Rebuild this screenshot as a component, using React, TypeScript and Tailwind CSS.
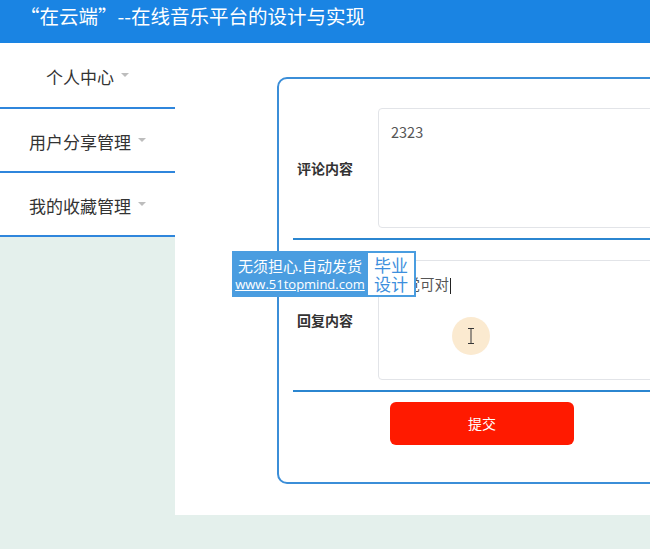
import { ReactNode } from 'react';

const font = { fontFamily: '"Microsoft YaHei", "Noto Sans CJK SC", "Noto Sans", sans-serif' };

function Caret() {
    return <span className="ml-[7px] inline-block w-0 h-0 border-l-[4px] border-r-[4px] border-t-[4px] border-l-transparent border-r-transparent border-t-[#bdbdbd] translate-y-[-2px]" />;
}

function MenuItem({ label, first }: { label: string; first?: boolean }) {
    return (
        <div className={`${first ? 'h-[66px]' : 'h-[64px]'} bg-white border-b-2 border-[#2f86dc] flex items-center justify-center pt-[4px] text-[17px] text-[#333]`}>
            {label}
            <Caret />
        </div>
    );
}

function FormRow({ label, children }: { label: string; children: ReactNode }) {
    return (
        <div className="flex items-center">
            <div className="w-[85px] pl-[4px] text-[14px] font-bold text-[#333]">{label}</div>
            <div className="w-[320px] h-[120px] border border-[#e2e4e8] rounded-[4px] bg-white px-[12px] pt-[12px] text-[14.5px] text-[#555]">
                {children}
            </div>
        </div>
    );
}

export default function App() {
    return (
        <div className="w-[650px] h-[549px] overflow-hidden bg-[#e4f0ec] relative" style={font}>
            <div className="h-[43px] bg-[#1a84e3] pl-[20px] pt-[2px] leading-[28px] text-white text-[19.5px]">
                “在云端”--在线音乐平台的设计与实现
            </div>
            <div className="flex">
                <div className="w-[175px] shrink-0">
                    <MenuItem label="个人中心" first />
                    <MenuItem label="用户分享管理" />
                    <MenuItem label="我的收藏管理" />
                </div>
                <div className="w-[475px] h-[472px] bg-white pt-[34px] pl-[102px] shrink-0">
                    <div className="w-[440px] h-[407px] border-2 border-[#3b8ed8] rounded-[10px] pt-[29px] pl-[14px]">
                        <FormRow label="评论内容">2323</FormRow>
                        <div className="h-[2px] bg-[#2b86d0] mt-[10px] mb-[20px]" />
                        <FormRow label="回复内容">
                            <span>我觉可对</span>
                            <span className="inline-block w-px h-[16px] bg-[#222] align-middle ml-[1px]" />
                        </FormRow>
                        <div className="h-[2px] bg-[#2b86d0] mt-[10px] mb-[10px]" />
                        <button className="ml-[97px] w-[184px] h-[43px] rounded-[6px] bg-[#ff1a00] text-white text-[14px]">
                            提交
                        </button>
                    </div>
                </div>
            </div>

            {/* watermark */}
            <div className="absolute left-[232px] top-[251px] h-[46px] flex bg-[#4a9de0] p-[2px] pl-0">
                <div className="w-[136px] flex flex-col items-center justify-center text-white leading-none">
                    <div className="text-[15px] mb-[5px]">无须担心.自动发货</div>
                    <div className="text-[13px] underline" style={{ fontFamily: '"Open Sans", "Noto Sans", sans-serif' }}>www.51topmind.com</div>
                </div>
                <div className="w-[46px] bg-white flex flex-col items-center justify-center text-[#3d8fdd] text-[17px] leading-[19px]">
                    <div>毕业</div>
                    <div>设计</div>
                </div>
            </div>

            {/* mouse cursor highlight */}
            <div className="absolute left-[452px] top-[317px] w-[38px] h-[38px] rounded-full bg-[#fbe8cc] opacity-90 flex items-center justify-center">
                <svg width="8" height="16" viewBox="0 0 8 16" fill="none" stroke="#222" strokeWidth="1">
                    <path d="M1 0.5h6M1 15.5h6M4 0.5v15" />
                </svg>
            </div>
        </div>
    );
}
